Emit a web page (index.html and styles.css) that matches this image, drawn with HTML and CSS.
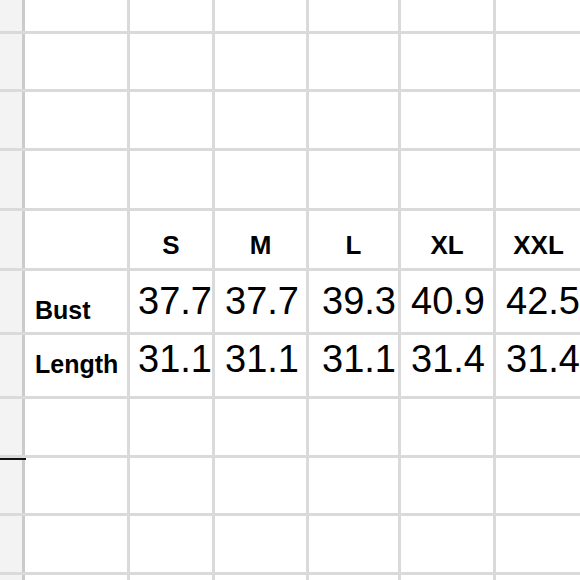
FILE: index.html
```html
<!DOCTYPE html>
<html>
<head>
<meta charset="utf-8">
<link rel="stylesheet" href="styles.css">
</head>
<body>
<div class="sheet">
  <div class="grid">
    <!-- row 0 -->
    <div class="rh"></div><div class="c"></div><div class="c"></div><div class="c"></div><div class="c"></div><div class="c"></div><div class="c"></div>
    <!-- row 1 -->
    <div class="rh"></div><div class="c"></div><div class="c"></div><div class="c"></div><div class="c"></div><div class="c"></div><div class="c"></div>
    <!-- row 2 -->
    <div class="rh"></div><div class="c"></div><div class="c"></div><div class="c"></div><div class="c"></div><div class="c"></div><div class="c"></div>
    <!-- row 3 -->
    <div class="rh"></div><div class="c"></div><div class="c"></div><div class="c"></div><div class="c"></div><div class="c"></div><div class="c"></div>
    <!-- header row -->
    <div class="rh"></div>
    <div class="c"></div>
    <div class="c size">S</div>
    <div class="c size">M</div>
    <div class="c size">L</div>
    <div class="c size">XL</div>
    <div class="c size">XXL</div>
    <!-- bust row -->
    <div class="rh"></div>
    <div class="c label bust">Bust</div>
    <div class="c num bust-n col-s">37.7</div>
    <div class="c num bust-n">37.7</div>
    <div class="c num bust-n col-l">39.3</div>
    <div class="c num bust-n">40.9</div>
    <div class="c num bust-n">42.5</div>
    <!-- length row -->
    <div class="rh"></div>
    <div class="c label length">Length</div>
    <div class="c num len-n col-s">31.1</div>
    <div class="c num len-n">31.1</div>
    <div class="c num len-n col-l">31.1</div>
    <div class="c num len-n">31.4</div>
    <div class="c num len-n">31.4</div>
    <!-- row 7 -->
    <div class="rh"></div><div class="c"></div><div class="c"></div><div class="c"></div><div class="c"></div><div class="c"></div><div class="c"></div>
    <!-- row 8 (selected row marker) -->
    <div class="rh marked"></div><div class="c"></div><div class="c"></div><div class="c"></div><div class="c"></div><div class="c"></div><div class="c"></div>
    <!-- row 9 -->
    <div class="rh"></div><div class="c"></div><div class="c"></div><div class="c"></div><div class="c"></div><div class="c"></div><div class="c"></div>
    <!-- row 10 -->
    <div class="rh"></div><div class="c"></div><div class="c"></div><div class="c"></div><div class="c"></div><div class="c"></div><div class="c"></div>
  </div>
</div>
</body>
</html>
```

FILE: styles.css
```css
html, body {
  margin: 0;
  padding: 0;
  background: #ffffff;
}

.sheet {
  width: 580px;
  height: 580px;
  overflow: hidden;
}

.grid {
  display: grid;
  grid-template-columns: 22px 102px 82px 91px 89px 92px 85px;
  grid-template-rows: 31px 55px 56px 57px 57px 61px 61px 56px 55px 56px 10px;
  gap: 3px;
  background: #dadada;
  width: 581px;
  font-family: "Liberation Sans", Arial, sans-serif;
  color: #000;
}

.rh {
  background: #f3f3f3;
  box-shadow: 3px 0 0 #cbcbcb;
  position: relative;
}

.rh.marked::before {
  content: "";
  position: absolute;
  left: 0;
  top: 0;
  width: 26px;
  height: 2px;
  background: #111;
  z-index: 2;
}

.c {
  background: #ffffff;
  overflow: hidden;
  white-space: nowrap;
  display: flex;
  line-height: 1;
}

.size {
  font-weight: bold;
  font-size: 26px;
  justify-content: center;
  align-items: flex-end;
  padding-bottom: 10px;
}

.label {
  font-weight: bold;
  font-size: 25px;
  align-items: flex-end;
  padding-left: 10px;
}

.bust {
  padding-bottom: 9px;
}

.length {
  padding-bottom: 19px;
}

.num {
  font-size: 38px;
  align-items: flex-end;
  padding-left: 10px;
}

.num.col-s {
  padding-left: 8px;
}

.num.col-l {
  padding-left: 13px;
}

.bust-n {
  padding-bottom: 12px;
}

.len-n {
  padding-bottom: 18px;
}
```
